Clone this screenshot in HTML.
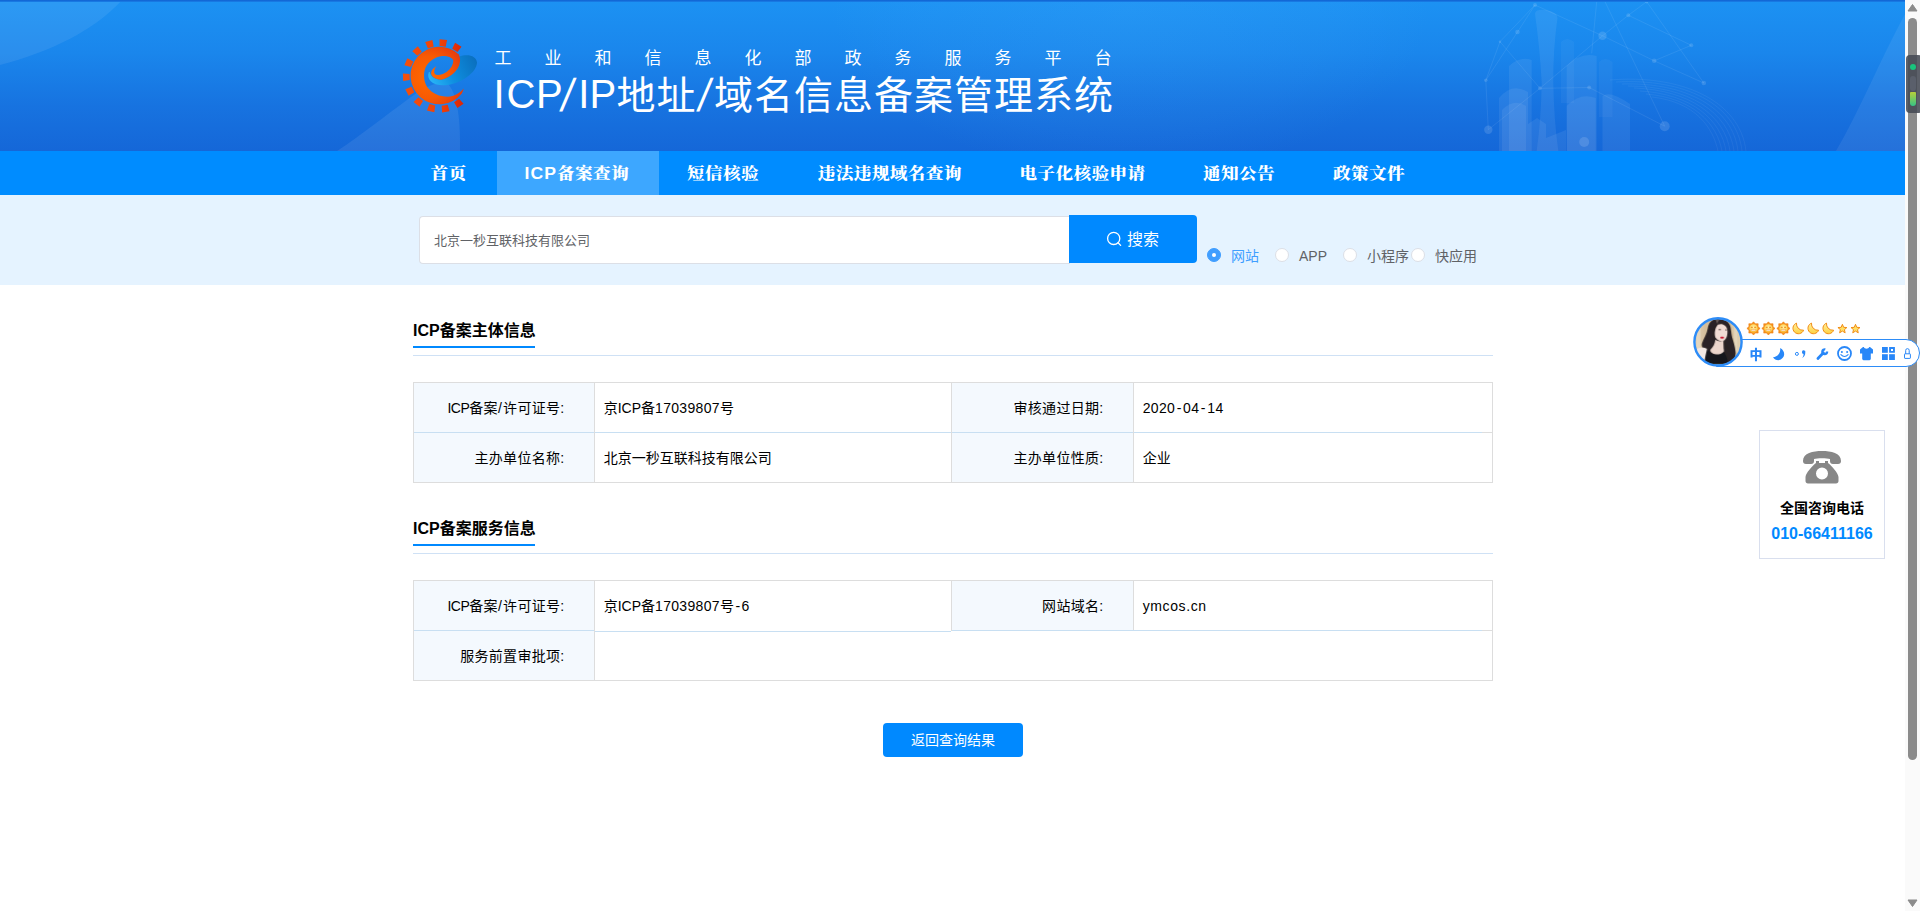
<!DOCTYPE html>
<html lang="zh-CN">
<head>
<meta charset="utf-8">
<title>ICP/IP地址/域名信息备案管理系统</title>
<style>
*{box-sizing:border-box;margin:0;padding:0}
html,body{width:1920px;height:911px;overflow:hidden;background:#fff}
body{position:relative;font-family:"Liberation Sans","Noto Sans CJK SC",sans-serif;font-size:14px;color:#111}
.abs{position:absolute}
#page{position:absolute;left:0;top:0;width:1905px;height:911px;overflow:hidden;background:#fff}
#hdr{position:absolute;left:0;top:0;width:1905px;height:151px;background:linear-gradient(180deg,#1c92f3 0%,#1a86ec 35%,#1773e0 70%,#1567d8 100%);overflow:hidden}
#hdr .topline{position:absolute;left:0;top:0;width:100%;height:2px;background:linear-gradient(180deg,#1060d0,#1a80e8)}
#sub{position:absolute;left:494.500px;top:47.500px;font-size:17px;line-height:22px;letter-spacing:33px;color:#fff;font-weight:400;white-space:nowrap;font-family:"Liberation Sans","Noto Sans CJK SC",sans-serif}
#ttl{position:absolute;left:0;top:0;color:#fff;font-weight:400;white-space:nowrap;font-family:"Liberation Sans","Noto Sans CJK SC",sans-serif}
#ttl span{position:absolute;line-height:54px;white-space:nowrap}
#ttl .la{top:67px;font-size:40px}
#ttl .sl{transform-origin:0 60%;transform:skewX(-10.500deg) scale(1,1.15)}
#ttl .cj{top:69px;font-size:39px;letter-spacing:1px}
#nav{position:absolute;left:0;top:151px;width:1905px;height:44px;background:#008cff}
#nav .it{position:absolute;top:0;height:44px;line-height:46px;color:#fff;font-family:"Liberation Serif","Noto Serif CJK SC",serif;font-weight:900;font-size:16px;letter-spacing:.36px;white-space:nowrap;text-align:center}
#nav .it span{display:inline-block;transform:translateX(-.8px) scaleX(1.1)}
#nav .it b{font-family:"Liberation Sans",sans-serif;font-weight:700;letter-spacing:1px}
#nav .act{background:#3da7ff}
#srch{position:absolute;left:0;top:195px;width:1905px;height:90px;background:#e5f3ff}
#inp{position:absolute;left:419px;top:216px;width:651px;height:48px;background:#fff;border:1px solid #dcdfe6;border-right:0;border-radius:4px 0 0 4px;font-size:13px;line-height:47px;padding-left:14px;color:#606266}
#btn{position:absolute;left:1069px;top:215px;width:128px;height:48px;background:#0089ff;border-radius:0 4px 4px 0;color:#fff;font-size:16px;line-height:48px}
.rd{position:absolute;top:248px;width:14px;height:14px;border-radius:50%;border:1px solid #dcdfe6;background:#fff}
.rd.on{border-color:#409eff;background:#409eff}
.rd.on:after{content:"";position:absolute;left:4px;top:4px;width:4px;height:4px;border-radius:50%;background:#fff}
.rl{position:absolute;top:246px;font-size:14px;line-height:20px;color:#606266;white-space:nowrap}
.h2{position:absolute;left:413px;font-size:16px;line-height:22px;font-weight:700;color:#000;white-space:nowrap}
.ul{position:absolute;left:413px;width:122px;height:2px;background:#0089ff}
.hl{position:absolute;left:413px;width:1080px;height:1px;background:#cfe1f5}
.tb{position:absolute;left:413px;width:1080px;border:1px solid #dcdfe6}
.c{position:absolute;font-size:14px;line-height:20px;color:#000;white-space:nowrap}
.lab{background:#f4f9fe}

.vl{width:1px;background:#ddd}
.c.r{text-align:right;letter-spacing:.3px}
.c .d{letter-spacing:.32px}
.c .h{margin:0 1.500px}
.c .s{margin:0 1px 0 0}
.c .i{letter-spacing:-.5px}
#back{left:883px;top:723px;width:140px;height:34px;border-radius:4px;background:#0089ff;color:#fff;font-size:14px;line-height:34px;text-align:center}
#tel{left:1760px;top:523px;width:124px;text-align:center;font-size:16px;line-height:22px;font-weight:700;color:#0089ff;white-space:nowrap}
#zh{left:1749.500px;top:345.500px;font-size:13px;line-height:18px;font-weight:900;color:#2887f8;font-family:"Liberation Sans","Noto Sans CJK SC",sans-serif}
</style>
</head>
<body>
<div id="page">
  <div id="hdr">
    
    <svg class="abs" style="left:0;top:0" width="1905" height="151" viewBox="0 0 1905 151">
      <path d="M0 0H122C95 30 50 52 0 65Z" fill="#fff" fill-opacity=".075"/>
      <path d="M337 151C360 136 385 116 411 97C425 87 440 80 448 84C456 92 461 115 460 151Z" fill="#fff" fill-opacity=".08"/>
      <defs><radialGradient id="fan" cx="1130" cy="10" r="300" gradientUnits="userSpaceOnUse" gradientTransform="translate(0 10) scale(1 .55) translate(0 -10)"><stop offset="0" stop-color="#4db4ff" stop-opacity=".16"/><stop offset=".7" stop-color="#4db4ff" stop-opacity=".07"/><stop offset="1" stop-color="#4db4ff" stop-opacity="0"/></radialGradient></defs>
      <rect x="800" y="0" width="700" height="151" fill="url(#fan)"/>
      <path d="M1905 14C1880 60 1860 110 1836 151H1905Z" fill="#fff" fill-opacity=".07"/>
      <g fill="#fff" fill-opacity=".07">
        <path d="M1535 14Q1535 9 1546 10Q1557.500 12 1557.500 18Q1553 50 1553.300 83Q1554 120 1558.300 151H1536.700Q1541 120 1541.700 83Q1540 50 1535 14Z"/>
        <path d="M1509 66Q1520 56 1531.700 60V151H1509Z"/>
        <path d="M1499 98Q1512 82 1528 92V151H1499Z"/>
        <path d="M1502 110Q1514 98 1526 106V151H1502Z"/>
        <path d="M1561 42Q1567 36 1574 42V103H1561Z" fill-opacity=".04"/>
        <path d="M1566.700 66Q1580 52 1596.700 56V151H1566.700Z"/>
        <path d="M1599 62Q1605 56 1612.500 62V117H1599Z" fill-opacity=".04"/>
        <path d="M1566.700 106Q1580 92 1595.800 98V151H1566.700Z"/>
        <path d="M1602.500 96Q1610 90 1630 104V151H1602.500Z"/>
        <path d="M1528 124L1537 118L1546 124V151H1528Z"/>
        <path d="M1546 138L1566 130V151H1546Z"/>
      </g>
      <g stroke="#fff" stroke-opacity=".10" stroke-width=".8" fill="none">
        <path d="M1535.0 5.0L1500.0 41.7L1485.8 80.3L1488.3 129.7M1535.0 5.0L1602.5 35.8L1654.2 60.8L1703.8 83.0M1654.2 60.8L1691.3 45.3L1628.3 15.3L1602.5 35.8L1540.0 88.3L1500.0 41.7M1646.7 1.7L1703.8 83.0M1628.3 15.3L1646.7 1.7M1517.5 32.0L1485.8 80.3M1605.0 1.7L1664.7 126.2L1589.2 87.5L1540.0 88.3L1488.3 129.7M1596.7 1.7L1591.7 53.3M1517.5 32.0L1535.0 5.0"/>
        <path d="M1610 80C1680 74 1740 100 1746 151M1616 82C1684 78 1737 104 1742 151M1622 84C1686 82 1733 108 1738 151M1628 86C1688 86 1729 112 1734 151M1634 88C1690 90 1725 116 1730 151M1640 91C1692 94 1721 120 1726 151M1646 94C1694 98 1717 124 1722 151M1652 97C1696 102 1713 128 1718 151" stroke-opacity=".07"/>
      </g>
      <g fill="#fff" fill-opacity=".13">
        <circle cx="1535.0" cy="5.0" r="2.0"/><circle cx="1517.5" cy="32.0" r="2.3"/><circle cx="1500.0" cy="41.7" r="1.2"/><circle cx="1485.8" cy="80.3" r="1.8"/><circle cx="1488.3" cy="129.7" r="4.2"/><circle cx="1602.5" cy="35.8" r="4.2"/><circle cx="1628.3" cy="15.3" r="2.0"/><circle cx="1646.7" cy="1.7" r="1.7"/><circle cx="1691.3" cy="45.3" r="2.0"/><circle cx="1654.2" cy="60.8" r="2.3"/><circle cx="1703.8" cy="83.0" r="2.3"/><circle cx="1664.7" cy="126.2" r="5.0"/><circle cx="1584.2" cy="142.0" r="5.0"/><circle cx="1589.2" cy="87.5" r="2.0"/><circle cx="1540.0" cy="88.3" r="2.0"/>
      </g>
    </svg>
    <svg class="abs" style="left:398px;top:34px" width="84" height="84" viewBox="0 0 911 911">
      <defs>
        <radialGradient id="og" cx="330" cy="470" r="420" gradientUnits="userSpaceOnUse"><stop offset="0" stop-color="#ff6a00"/><stop offset=".55" stop-color="#f85a04"/><stop offset="1" stop-color="#e43a0e"/></radialGradient>
        <linearGradient id="tg" x1="50" y1="455" x2="720" y2="455" gradientUnits="userSpaceOnUse"><stop offset="0" stop-color="#f5500c"/><stop offset=".6" stop-color="#ee4209"/><stop offset="1" stop-color="#dc2406"/></linearGradient>
        <linearGradient id="bg" x1="330" y1="520" x2="850" y2="280" gradientUnits="userSpaceOnUse"><stop offset="0" stop-color="#2bb8f8"/><stop offset=".45" stop-color="#0f8fe0"/><stop offset="1" stop-color="#0a6fbe"/></linearGradient>
      </defs>
      <path fill="url(#bg)" d="M335 412C300 500 390 575 540 553C690 530 850 420 857 312C852 240 762 212 660 246L672 300C660 400 560 480 470 497C380 490 350 450 345 412Z"/>
      <g fill="url(#tg)">
        <polygon points="404,776 394,849 314,829 340,760"/><polygon points="272,727 233,789 169,737 221,685"/><polygon points="177,631 116,671 79,598 147,572"/><polygon points="128,499 56,510 53,428 126,433"/><polygon points="140,359 69,338 102,263 166,298"/><polygon points="209,237 155,188 215,133 258,193"/><polygon points="324,156 295,88 373,64 387,136"/><polygon points="451,130 451,57 532,65 517,137"/><polygon points="588,161 619,94 689,137 645,195"/><polygon points="662,701 711,756 644,803 608,739"/><polygon points="539,767 559,838 478,852 474,779"/>
      </g>
      <path fill="url(#og)" d="M712 590Q706 624 690 648A312 312 0 1 1 660 222C672 250 676 275 672 300C662 385 590 462 470 497C400 495 352 455 360 415C368 385 388 365 415 350C392 385 385 415 400 435C420 452 470 452 530 410C575 375 600 330 600 290C596 258 540 236 480 238C400 245 330 300 300 360C270 430 280 520 320 580C370 645 450 680 540 680C610 675 670 640 712 590Z"/>
    </svg>
    <div class="topline"></div>
    <div id="sub">工业和信息化部政务服务平台</div>
    <div id="ttl"><span class="la" style="left:493.500px">I</span><span class="la" style="left:506.400px">C</span><span class="la" style="left:536px">P</span><span class="la sl" style="left:561.200px;top:69px">/</span><span class="la" style="left:578.300px">I</span><span class="la" style="left:589.600px">P</span><span class="cj" style="left:616.500px">地址</span><span class="la sl" style="left:697.600px;top:69px">/</span><span class="cj" style="left:714px">域名信息备案管理系统</span></div>
  </div>
  <div id="nav">
    <div class="it" style="left:402px;width:95px"><span>首页</span></div>
    <div class="it act" style="left:497px;width:162px"><span><b>ICP</b>备案查询</span></div>
    <div class="it" style="left:659px;width:130px"><span>短信核验</span></div>
    <div class="it" style="left:789px;width:202px"><span>违法违规域名查询</span></div>
    <div class="it" style="left:991px;width:184px"><span>电子化核验申请</span></div>
    <div class="it" style="left:1175px;width:130px"><span>通知公告</span></div>
    <div class="it" style="left:1305px;width:130px"><span>政策文件</span></div>
  </div>
  <div id="srch"></div>
  <div id="inp">北京一秒互联科技有限公司</div>
  <div id="btn"><svg class="abs" style="left:36px;top:15px" width="18" height="18" viewBox="0 0 18 18"><circle cx="8.700" cy="8.400" r="6.100" fill="none" stroke="#fff" stroke-width="1.300"/><path d="M13.100 12.700L15.600 15.400" stroke="#fff" stroke-width="1.300" stroke-linecap="round"/></svg><span class="abs" style="left:58px;top:1px">搜索</span></div>
  <div class="rd on" style="left:1207px"></div><div class="rl" style="left:1231px;color:#409eff">网站</div>
  <div class="rd" style="left:1275px"></div><div class="rl" style="left:1299px">APP</div>
  <div class="rd" style="left:1343px"></div><div class="rl" style="left:1367px">小程序</div>
  <div class="rd" style="left:1411px"></div><div class="rl" style="left:1435px">快应用</div>

  <div class="h2" style="top:320px">ICP备案主体信息</div>
  <div class="ul" style="top:346px"></div>
  <div class="hl" style="top:355px"></div>

  <div class="h2" style="top:518px">ICP备案服务信息</div>
  <div class="ul" style="top:544px"></div>
  <div class="hl" style="top:553px"></div>

  <!-- table 1 -->
  <div class="abs lab" style="left:414px;top:383px;width:180px;height:99px"></div>
  <div class="abs lab" style="left:952px;top:383px;width:181px;height:99px"></div>
  <div class="abs" style="left:413px;top:382px;width:1080px;height:101px;border:1px solid #ddd"></div>
  <div class="abs" style="left:414px;top:432px;width:1068px;height:1px;background:#c8dff2"></div>
  <div class="abs" style="left:1482px;top:432px;width:10px;height:1px;background:#ddd"></div>
  <div class="abs vl" style="left:594px;top:383px;height:99px"></div>
  <div class="abs vl" style="left:951px;top:383px;height:99px"></div>
  <div class="abs vl" style="left:1133px;top:383px;height:99px"></div>
  <div class="c r" style="right:1340.500px;top:398px"><span class="i">ICP</span>备案<span class="s">/</span>许可证号:</div>
  <div class="c" style="left:603.700px;top:398px">京ICP备<span class="d">17039807</span>号</div>
  <div class="c r" style="right:801.500px;top:398px">审核通过日期:</div>
  <div class="c" style="left:1142.700px;top:398px"><span class="d">2020<span class="h">-</span>04<span class="h">-</span>14</span></div>
  <div class="c r" style="right:1340.500px;top:448px">主办单位名称:</div>
  <div class="c" style="left:603.700px;top:448px">北京一秒互联科技有限公司</div>
  <div class="c r" style="right:801.500px;top:448px">主办单位性质:</div>
  <div class="c" style="left:1142.700px;top:448px">企业</div>

  <!-- table 2 -->
  <div class="abs lab" style="left:414px;top:581px;width:180px;height:99px"></div>
  <div class="abs lab" style="left:952px;top:581px;width:181px;height:49px"></div>
  <div class="abs" style="left:413px;top:580px;width:1080px;height:101px;border:1px solid #ddd"></div>
  <div class="abs" style="left:414px;top:630px;width:180px;height:1px;background:#c8dff2"></div>
  <div class="abs" style="left:594px;top:631px;width:357px;height:1px;background:#c8dff2"></div>
  <div class="abs" style="left:951px;top:630px;width:531px;height:1px;background:#c8dff2"></div>
  <div class="abs" style="left:1482px;top:630px;width:10px;height:1px;background:#ddd"></div>
  <div class="abs vl" style="left:594px;top:581px;height:99px"></div>
  <div class="abs vl" style="left:951px;top:581px;height:50px"></div>
  <div class="abs vl" style="left:1133px;top:581px;height:49px"></div>
  <div class="c r" style="right:1340.500px;top:596px"><span class="i">ICP</span>备案<span class="s">/</span>许可证号:</div>
  <div class="c" style="left:603.700px;top:596px">京ICP备<span class="d">17039807</span>号<span class="h">-</span>6</div>
  <div class="c r" style="right:801.500px;top:596px">网站域名:</div>
  <div class="c" style="left:1142.700px;top:596px"><span style="letter-spacing:.6px">ymcos.cn</span></div>
  <div class="c r" style="right:1340.500px;top:646px">服务前置审批项:</div>

  <div class="abs" id="back">返回查询结果</div>

  <!-- phone box -->
  <div class="abs" style="left:1759px;top:430px;width:126px;height:129px;border:1px solid #d9dfee;background:#fff"></div>
  <svg class="abs" style="left:1802px;top:450px" width="40" height="34" viewBox="0 0 40 34">
    <path fill="#878787" d="M1 11C1 3 11 1 20 1C29 1 39 3 39 11C39 13 38 14 36 14H31C29 14 28 13 28 11V9C25 8 15 8 12 9V11C12 13 11 14 9 14H4C2 14 1 13 1 11Z"/>
    <path fill="#878787" d="M14 11H17V13H23V11H26V13C30 16 36 23 36.500 27V31C36.500 32.500 35.500 33.500 34 33.500H6C4.500 33.500 3.500 32.500 3.500 31V27C4 23 10 16 14 13ZM20 17.500A6 6 0 1 0 20 29.500A6 6 0 1 0 20 17.500Z"/>
  </svg>
  <div class="abs" style="left:1760px;top:498px;width:124px;text-align:center;font-size:14px;line-height:20px;font-weight:700;color:#000">全国咨询电话</div>
  <div class="abs" id="tel">010-66411166</div>
</div>

<!-- scrollbar -->
<div class="abs" style="left:1905px;top:0;width:15px;height:911px;background:#fafafa"></div>
<div class="abs" style="left:1908px;top:18px;width:9px;height:742px;border-radius:4.5px;background:#8b8b8b"></div>
<svg class="abs" style="left:1905px;top:0" width="15" height="911" viewBox="0 0 15 911"><path d="M3 11L7.500 4.500L12 11Z" fill="#8b8b8b" stroke="#8b8b8b" stroke-linejoin="round" stroke-width="1"/><path d="M3 900L7.500 906.500L12 900Z" fill="#8b8b8b" stroke="#8b8b8b" stroke-linejoin="round" stroke-width="1"/></svg>
<!-- small dark overlay -->
<div class="abs" style="left:1906px;top:55px;width:16px;height:58px;border-radius:4px;background:rgba(70,74,84,.88)"></div>
<div class="abs" style="left:1910px;top:64px;width:6px;height:6px;border-radius:50%;background:#19c37d"></div>
<div class="abs" style="left:1910px;top:76px;width:6px;height:15px;border-radius:3px;background:#5a5f6b"></div>
<div class="abs" style="left:1910px;top:92px;width:6px;height:14px;border-radius:1px 1px 3px 3px;background:linear-gradient(180deg,#b7cf3a,#35c486)"></div>

<!-- IME floating bar -->
<div class="abs" style="left:1716px;top:339px;width:204px;height:28px;border:1px solid #2d8cf7;border-radius:0 14px 14px 0;background:#fff"></div>
<svg class="abs" style="left:1693px;top:317px" width="50" height="50" viewBox="0 0 50 50">
  <defs><filter id="avf" x="-10%" y="-10%" width="120%" height="120%"><feGaussianBlur stdDeviation="7"/></filter><clipPath id="avc"><circle cx="25" cy="25" r="23"/></clipPath>
  <linearGradient id="avb" x1="0" y1="0" x2="1" y2="0"><stop offset="0" stop-color="#e2d2b8"/><stop offset=".25" stop-color="#d3bd9b"/><stop offset=".75" stop-color="#d8c3a0"/><stop offset="1" stop-color="#e3d3b6"/></linearGradient></defs>
  <g clip-path="url(#avc)">
    <rect width="50" height="50" fill="url(#avb)"/>
    <g transform="translate(-5 -5) scale(.06588)" filter="url(#avf)">
      <rect x="130" y="150" width="60" height="420" fill="#e8dcc6" opacity=".7"/>
      <rect x="700" y="200" width="50" height="420" fill="#e8dcc6" opacity=".6"/>
      <path d="M440 105C360 110 310 170 300 250C290 330 240 400 215 470C195 530 230 560 290 560L330 760L640 780C700 740 730 680 722 600C715 520 690 450 670 380C650 300 660 200 600 150C560 115 500 100 440 105Z" fill="#2b2325"/>
      <path d="M455 190C520 165 590 200 598 280C603 350 585 410 545 435C500 455 440 430 415 380C395 330 410 230 455 190Z" fill="#f1dcd4"/>
      <path d="M415 420C450 450 520 450 540 430L545 560C570 600 540 650 460 650C400 650 330 620 340 570C380 540 410 480 415 420Z" fill="#ecd5cc"/>
      <path d="M140 560C180 530 250 535 290 560L300 600L250 740C200 720 160 680 140 620Z" fill="#f2e8e3"/>
      <path d="M290 555C330 640 470 680 545 600C600 640 640 720 640 790L250 790C250 720 270 640 290 555Z" fill="#17161b"/>
      <path d="M540 430C560 500 600 560 640 620C680 680 700 720 690 760L600 780C610 700 560 640 545 600Z" fill="#2b2325"/>
      <path d="M440 200C400 260 380 330 395 400C360 350 370 250 440 200Z" fill="#2b2325"/>
      <ellipse cx="518" cy="388" rx="30" ry="14" fill="#c9142d"/>
      <ellipse cx="482" cy="266" rx="20" ry="8" fill="#3a2a2a"/>
      <ellipse cx="578" cy="272" rx="14" ry="8" fill="#3a2a2a"/>
      <path d="M420 115C440 105 470 105 480 112C460 140 450 160 445 185C435 160 425 135 420 115Z" fill="#8c7d78" opacity=".6"/>
    </g>
  </g>
  <circle cx="25" cy="24.900" r="23.600" fill="none" stroke="#2d8cf7" stroke-width="2.400"/>
</svg>
<div class="abs" id="zh">中</div>
<svg class="abs" style="left:1744px;top:316px" width="176" height="54" viewBox="0 0 176 54">
  <defs>
    <radialGradient id="sg" cx=".5" cy=".4" r=".6"><stop offset="0" stop-color="#fff6b0"/><stop offset="1" stop-color="#ffc83a"/></radialGradient>
    <linearGradient id="mg" x1="0" y1="0" x2="0" y2="1"><stop offset="0" stop-color="#fff0a0"/><stop offset="1" stop-color="#ffd23f"/></linearGradient>
    <g id="sun">
      <polygon points="0.00,-6.60 1.88,-4.53 4.67,-4.67 4.53,-1.88 6.60,0.00 4.53,1.88 4.67,4.67 1.88,4.53 0.00,6.60 -1.88,4.53 -4.67,4.67 -4.53,1.88 -6.60,0.00 -4.53,-1.88 -4.67,-4.67 -1.88,-4.53" fill="#f6931e" stroke="#ef7d12" stroke-width=".6" stroke-linejoin="round"/>
      <circle r="4.200" fill="url(#sg)"/>
      <path d="M-2.600 -1.100H-.7M.7 -1.100H2.600" stroke="#e8780c" stroke-width=".9"/>
      <rect x="-2.300" y=".9" width="4.600" height="1.700" rx=".6" fill="#fff" stroke="#f0901a" stroke-width=".6"/>
    </g>
    <g id="moon"><path d="M52.500 7.100A5.500 5.500 0 1 0 59.600 14.200A6.400 6.400 0 0 1 52.500 7.100Z" fill="url(#mg)" stroke="#f08c14" stroke-width="1" stroke-linejoin="round"/></g>
    <g id="star"><polygon points="0.00,-4.70 1.23,-1.70 4.47,-1.45 2.00,0.65 2.76,3.80 0.00,2.10 -2.76,3.80 -2.00,0.65 -4.47,-1.45 -1.23,-1.70" fill="#ffe066" stroke="#f08c14" stroke-width="1" stroke-linejoin="round"/></g>
  </defs>
  <use href="#sun" x="9.500" y="12.400"/><use href="#sun" x="24.400" y="12.400"/><use href="#sun" x="39.400" y="12.400"/>
  <use href="#moon"/><use href="#moon" x="15"/><use href="#moon" x="30"/>
  <use href="#star" x="98.400" y="13"/><use href="#star" x="111.500" y="13"/>
  <g fill="#2887f8">
    <path d="M36.200 32C41.800 35 41.800 42.600 34.400 44.300C32 44.300 30.200 43 29 41.200C33.800 40.900 36.800 36.700 36.200 32Z"/>
    <circle cx="52.900" cy="37.900" r="1.500" fill="none" stroke="#2887f8" stroke-width="1"/>
    <path d="M58 36.200A1.700 1.700 0 1 1 61.300 36.500C61.400 38.800 60.200 40.900 58.200 42C59.100 40.700 59.600 39.300 59.500 38C58.600 37.800 58 37.100 58 36.200Z"/>
    <path d="M73.900 42.500L79.400 36.700" stroke="#2887f8" stroke-width="2.700" stroke-linecap="round" fill="none"/>
    <path d="M81.300 33.400A2.400 2.400 0 1 0 83.100 35.500" stroke="#2887f8" stroke-width="2.300" fill="none"/>
    <circle cx="100.500" cy="37.500" r="6.500" fill="none" stroke="#2887f8" stroke-width="1.800"/>
    <circle cx="97.900" cy="35.900" r="1"/><circle cx="103.100" cy="35.900" r="1"/>
    <path d="M96.900 38.700Q100.500 42.400 104.100 38.700" fill="none" stroke="#2887f8" stroke-width="1.100" stroke-linecap="round"/>
    <path d="M119 31L116 33.400V37.600H118.200V43.200L119.400 44.200H125.600L126.800 43.200V37.600H129V33.400L126 31H125.200C124.600 33.200 120.400 33.200 119.800 31Z"/>
    <rect x="138" y="31" width="5.800" height="5.800"/><rect x="138" y="38.200" width="5.800" height="5.800"/><rect x="145.100" y="38.200" width="5.800" height="5.800"/>
    <path d="M145.100 31H150.900V36.800H145.100ZM147 32.900V34.900H149V32.900Z" fill-rule="evenodd"/>
    <rect x="160.500" y="37.800" width="5.900" height="4.600" rx=".5" fill="none" stroke="#2887f8" stroke-width="1"/>
    <path d="M161.700 37.800V34.400A1.750 1.750 0 0 1 165.200 34.400V37.800" fill="none" stroke="#2887f8" stroke-width="1"/>
  </g>
</svg>
</body>
</html>
